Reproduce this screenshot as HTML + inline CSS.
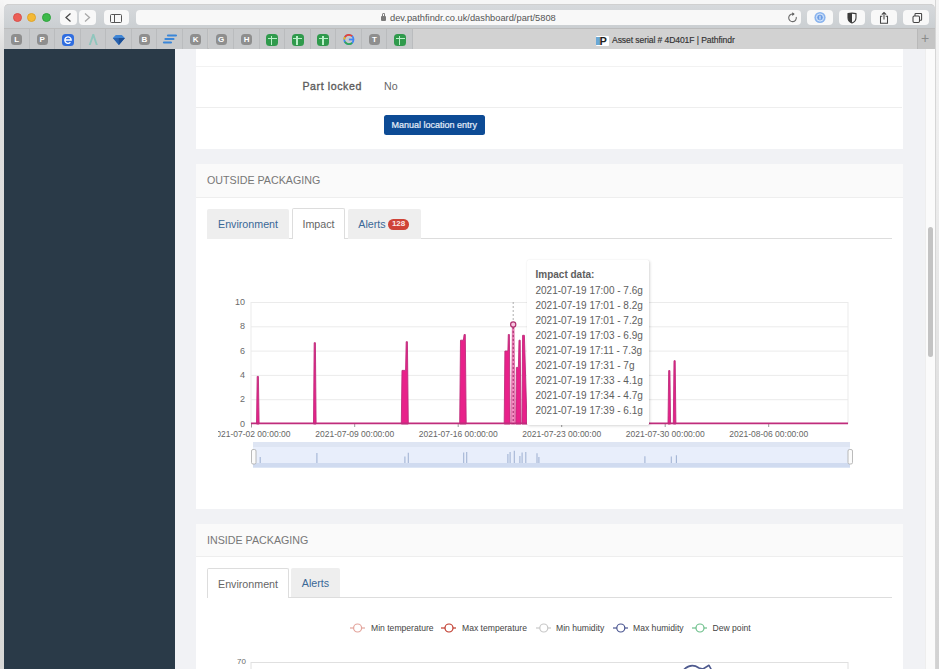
<!DOCTYPE html>
<html><head><meta charset="utf-8">
<style>
*{box-sizing:border-box;margin:0;padding:0}
html,body{width:939px;height:669px;overflow:hidden;background:#f6f6f6;font-family:"Liberation Sans",sans-serif}
.a{position:absolute}
#leftstrip{left:0;top:0;width:4px;height:669px;background:linear-gradient(#f6f6f6 0,#dedede 50px,#d8d8d6 100%)}
#rightstrip{left:934.5px;top:0;width:4.5px;height:669px;background:linear-gradient(#f4f4f4 0,#eeeeee 150px,#d2d2d2 100%);border-left:1px solid #d6d6d6}
#win{left:4px;top:4px;width:931px;height:665px;background:#f1f2f5;overflow:hidden;border-top:1px solid #c8c8c8;border-radius:5px 5px 0 0}
#toolbar{left:4px;top:4px;width:931px;height:24px;background:linear-gradient(#d6d9dc,#cbcfd2);border-top:1px solid #d0d0d0;border-radius:5px 5px 0 0}
#tabbar{left:4px;top:28px;width:931px;height:21px;background:#cbcbcb;border-top:1px solid #bcbcbc;border-bottom:1px solid #bdbdbd}
.tl{width:9.4px;height:9.4px;border-radius:50%;top:12.7px}
.btn{background:#f8f8f8;border-radius:4px;top:10px;height:15px}
.ptab{top:29px;height:20px;width:25.56px;border-right:1px solid #babcbe;background:#c7c9cb}
.pic{width:11px;height:11px;border-radius:3.5px;background:#a3a3a3;color:#fff;font-size:8px;font-weight:bold;text-align:center;line-height:11px;top:34px}
#sidebar{left:4px;top:49px;width:171px;height:620px;background:#2a3a48}
.card{background:#fff;left:196px;width:707px}
.hdr{background:#fafafa;border-bottom:1px solid #eeeeee}
.hl{font-size:10.7px;color:#777}
.tab{height:30px;top:0;font-size:10.7px;line-height:30px;text-align:center;color:#3a6897;background:#eeeeee;border-radius:2px 2px 0 0}
.tab.act{background:#fff;color:#666;border:1px solid #dddddd;border-bottom:none}
.yl{font-size:9px;color:#6a6a6a;text-align:right;width:20px}
.xl{font-size:8.5px;color:#666;white-space:nowrap;transform:translateX(-50%)}
.tt{font-size:10px;color:#5e5e5e;white-space:nowrap;left:535.5px}
.lg{font-size:8.6px;color:#444;white-space:nowrap;top:623px}
</style></head><body>
<div id="leftstrip" class="a"></div>
<div id="rightstrip" class="a"></div>
<div id="win" class="a"></div>
<div id="toolbar" class="a"></div>
<div class="a tl" style="left:12.9px;background:#ec5f57;border:1px solid #d9504a"></div>
<div class="a tl" style="left:27px;background:#f4b935;border:1px solid #dea42c"></div>
<div class="a tl" style="left:41.5px;background:#3cb94a;border:1px solid #2fa33d"></div>
<div class="a btn" style="left:60px;width:16.5px"></div>
<div class="a btn" style="left:79px;width:16.5px"></div>
<svg class="a" style="left:0;top:0" width="939" height="48">
  <polyline points="70.5,13.5 66,17.5 70.5,21.5" fill="none" stroke="#4a4a4a" stroke-width="1.3"/>
  <polyline points="85,13.5 89.5,17.5 85,21.5" fill="none" stroke="#a8a8a8" stroke-width="1.3"/>
</svg>
<div class="a btn" style="left:103.5px;width:25.5px"></div>
<div class="a" style="left:110px;top:13.5px;width:12px;height:9px;border:1.2px solid #555;border-radius:1.5px"></div>
<div class="a" style="left:114px;top:14px;width:1.2px;height:8px;background:#555"></div>
<div class="a btn" style="left:135.5px;width:665.5px"></div>
<div class="a" style="left:381px;top:16px;width:5px;height:5px;background:#7a7a7a;border-radius:1px"></div>
<div class="a" style="left:381.8px;top:13px;width:3.4px;height:4px;border:1px solid #7a7a7a;border-bottom:none;border-radius:2px 2px 0 0"></div>
<div class="a" style="left:390px;top:12.5px;font-size:9.3px;color:#555;white-space:nowrap">dev.pathfindr.co.uk/dashboard/part/5808</div>
<svg class="a" style="left:786px;top:11px" width="14" height="14">
  <path d="M10.2 6 A3.8 3.8 0 1 1 7 3.1" fill="none" stroke="#6a6a6a" stroke-width="1.1"/>
  <path d="M6.3 1.3 L8.7 3.1 L6.3 4.9 Z" fill="#555"/>
</svg>
<div class="a btn" style="left:807px;width:26px"></div>
<div class="a btn" style="left:839px;width:26px"></div>
<div class="a btn" style="left:871px;width:26px"></div>
<div class="a btn" style="left:903px;width:26px"></div>
<svg class="a" style="left:800px;top:4px" width="135" height="24">
  <circle cx="20" cy="13.5" r="5.6" fill="#8ab4ee"/>
  <circle cx="20" cy="13.5" r="3.6" fill="none" stroke="#dce9fb" stroke-width="1"/>
  <circle cx="20" cy="13.5" r="2.4" fill="#6d9de3"/>
  <rect x="19.5" y="11.8" width="1" height="3.6" fill="#eaf2fd"/>
  <path d="M48 9.6 Q52 8.6 56 9.6 V13.8 Q56 17.6 52 19 Q48 17.6 48 13.8 Z" fill="none" stroke="#3a3a3a" stroke-width="1.1"/>
  <path d="M48 9.6 Q50 9.1 52 9.1 V19 Q48 17.6 48 13.8 Z" fill="#3a3a3a"/>
  <path d="M81.8 10.6 L84 8.4 L86.2 10.6 M84 8.4 V15.5" fill="none" stroke="#444" stroke-width="1.05"/>
  <path d="M82.3 12.2 H80.5 V19.2 H87.5 V12.2 H85.7" fill="none" stroke="#444" stroke-width="1.05"/>
  <rect x="113" y="12" width="6.5" height="6.5" rx="1.2" fill="none" stroke="#444" stroke-width="1.05"/>
  <path d="M115 12 V10.2 Q115 9.5 115.8 9.5 H121 Q121.6 9.5 121.6 10.2 V15.6 Q121.6 16.3 121 16.3 H119.5" fill="none" stroke="#444" stroke-width="1.05"/>
</svg>
<!-- tab bar -->
<div id="tabbar" class="a"></div>

<div class="a" style="left:413px;top:29px;width:504px;height:20px;background:#d2d2d2"></div>
<div class="a" style="left:917px;top:29px;width:18px;height:20px;background:#c5c5c5;border-left:1px solid #b9b9b9"></div>
<div class="a" style="left:921px;top:30px;font-size:14px;color:#8a8a8a;line-height:16px">+</div>
<div class="a" style="left:596px;top:35.5px;width:13px;height:10px;background:#fff;border-radius:1px"></div>
<div class="a" style="left:596px;top:37px;width:4px;height:8px;background:#6aa8d6"></div>
<div class="a" style="left:599.5px;top:33.5px;font-size:11px;font-weight:bold;color:#222;line-height:14px">P</div>
<div class="a" style="left:612px;top:35px;font-size:8.6px;letter-spacing:-0.1px;color:#333;-webkit-text-stroke:0.15px #333;white-space:nowrap">Asset serial # 4D401F | Pathfindr</div>

<!-- content -->
<div id="sidebar" class="a"></div>
<div class="a" style="left:924.5px;top:49px;width:10px;height:620px;background:#fbfbfb;border-left:1px solid #eeeeee"></div>
<div class="a" style="left:927.5px;top:227px;width:5.5px;height:130px;background:#c3c3c3;border-radius:3px"></div>

<!-- card 1 -->
<div class="a card" style="top:49px;height:100px"></div>
<div class="a" style="left:196px;top:65.6px;width:706px;height:1px;background:#f2f2f2"></div>
<div class="a" style="left:196px;top:107px;width:706px;height:1px;background:#eeeeee"></div>
<div class="a" style="left:262px;top:80.3px;width:100px;text-align:right;font-size:10.6px;color:#5c5c5c;letter-spacing:0.6px;-webkit-text-stroke:0.35px #5c5c5c">Part locked</div>
<div class="a" style="left:384px;top:80.3px;font-size:10.6px;color:#666">No</div>
<div class="a" style="left:384px;top:115.3px;width:100.5px;height:19.3px;background:#0d4b95;border-radius:2.5px;color:#e6effa;-webkit-text-stroke:0.2px #e6effa;font-size:9px;line-height:21px;text-align:center;white-space:nowrap">Manual location entry</div>

<!-- card 2 -->
<div class="a card" style="top:164px;height:345px"></div>
<div class="a hdr" style="left:196px;top:164px;width:707px;height:34px"></div>
<div class="a hl" style="left:207px;top:174px">OUTSIDE PACKAGING</div>
<div class="a" style="left:207px;top:237.5px;width:685px;height:1px;background:#dddddd"></div>
<div class="a tab" style="left:207px;top:208.5px;width:82px">Environment</div>
<div class="a tab act" style="left:292px;top:208px;width:53px;height:30.5px">Impact</div>
<div class="a tab" style="left:348px;top:208.5px;width:73px;text-indent:-25px">Alerts</div>
<div class="a" style="left:387.8px;top:219.2px;width:21.6px;height:10.4px;background:#cf4337;border-radius:5.2px;color:#fbe9e7;font-size:8px;line-height:10.4px;text-align:center;font-weight:bold">128</div>

<svg class="a" style="left:0;top:0" width="939" height="669" id="chart1">
  <g stroke="#ebebeb" stroke-width="1">
    <line x1="251" y1="302.5" x2="848" y2="302.5"/>
    <line x1="251" y1="326.8" x2="848" y2="326.8"/>
    <line x1="251" y1="351.1" x2="848" y2="351.1"/>
    <line x1="251" y1="375.4" x2="848" y2="375.4"/>
    <line x1="251" y1="399.7" x2="848" y2="399.7"/>
    <line x1="251" y1="302" x2="251" y2="424"/>
    <line x1="848" y1="302" x2="848" y2="424"/>
  </g>
  <g stroke="#999" stroke-width="1">
    <line x1="251.5" y1="424" x2="251.5" y2="427.5"/>
    <line x1="354.7" y1="424" x2="354.7" y2="427"/>
    <line x1="458.2" y1="424" x2="458.2" y2="427"/>
    <line x1="561.7" y1="424" x2="561.7" y2="427"/>
    <line x1="665.2" y1="424" x2="665.2" y2="427"/>
    <line x1="768.7" y1="424" x2="768.7" y2="427"/>
  </g>
  <g fill="#e8218a" stroke="#bd2b7a" stroke-width="0.9" stroke-linejoin="round"><polygon points="256.5,424 257.2,376.4 258.4,376.4 259.1,424"/><polygon points="313.5,424 314.2,342.7 315.4,342.7 316.1,424"/><polygon points="401.3,424 402.0,370.4 405.6,370.4 406.2,341.7 407.4,341.7 408.3,424"/><polygon points="459.7,424 460.5,340.2 463.4,340.2 464.1,334.5 465.3,334.5 466.2,424"/><polygon points="504.2,424 504.9,351 507.9,351 508.3,334.5 509.4,334.5 510.1,424"/><polygon points="515.8,424 516.4,367.4 518.4,367.4 519,340.2 520.2,340.2 521,424"/><polygon points="522,424 522.6,335.3 524.4,335.3 527,424"/><polygon points="668,424 668.7,370.6 669.9,370.6 670.6,424"/><polygon points="673.3,424 674,360.7 675.2,360.7 675.9,424"/></g><polygon points="511.2,424 512.4,324.6 514,324.6 515.2,424" fill="#f48cc2" stroke="#d0408a" stroke-width="0.6"/>
  <line x1="251" y1="423.4" x2="848" y2="423.4" stroke="#c02c7c" stroke-width="1.9"/>
  <line x1="513.2" y1="302" x2="513.2" y2="324" stroke="#999" stroke-width="0.8" stroke-dasharray="2,2"/><line x1="513.2" y1="327" x2="513.2" y2="424" stroke="#9c2a66" stroke-width="1" stroke-dasharray="2,2"/>
  <circle cx="513.2" cy="324.5" r="2.6" fill="#f7c6e0" stroke="#b0306f" stroke-width="1.2"/>
  <!-- slider -->
  <rect x="253" y="442" width="597" height="25.5" fill="#e8eefb"/>
  <rect x="253" y="442" width="597" height="5" fill="#dee5f3"/>
  <rect x="253" y="463" width="597" height="4.6" fill="#d0dbf0"/>
  <g stroke="#a3b4d4" stroke-width="1.1"><line x1="260.2" y1="463" x2="260.2" y2="457.1"/><line x1="316.9" y1="463" x2="316.9" y2="452.9"/><line x1="404.9" y1="463" x2="404.9" y2="456.4"/><line x1="408.3" y1="463" x2="408.3" y2="452.8"/><line x1="463.7" y1="463" x2="463.7" y2="452.6"/><line x1="466.7" y1="463" x2="466.7" y2="451.9"/><line x1="507.9" y1="463" x2="507.9" y2="454.0"/><line x1="510.1" y1="463" x2="510.1" y2="451.9"/><line x1="514.3" y1="463" x2="514.3" y2="450.7"/><line x1="519.9" y1="463" x2="519.9" y2="455.9"/><line x1="522.1" y1="463" x2="522.1" y2="452.6"/><line x1="525.8" y1="463" x2="525.8" y2="452.1"/><line x1="537.0" y1="463" x2="537.0" y2="453.2"/><line x1="538.9" y1="463" x2="538.9" y2="457.0"/><line x1="644.9" y1="463" x2="644.9" y2="456.2"/><line x1="671.3" y1="463" x2="671.3" y2="456.4"/><line x1="676.4" y1="463" x2="676.4" y2="455.2"/></g>
  <rect x="251.5" y="449.5" width="4.5" height="14.5" rx="1.5" fill="#fbfbfb" stroke="#aaa" stroke-width="0.8"/>
  <rect x="848" y="449.5" width="4.5" height="14.5" rx="1.5" fill="#fbfbfb" stroke="#aaa" stroke-width="0.8"/>
</svg>
<div class="a yl" style="left:225px;top:297px">10</div>
<div class="a yl" style="left:225px;top:321.3px">8</div>
<div class="a yl" style="left:225px;top:345.6px">6</div>
<div class="a yl" style="left:225px;top:369.9px">4</div>
<div class="a yl" style="left:225px;top:394.2px">2</div>
<div class="a yl" style="left:225px;top:418.5px">0</div>
<div class="a xl" style="left:251px;top:428.5px">2021-07-02 00:00:00</div>
<div class="a xl" style="left:354.7px;top:428.5px">2021-07-09 00:00:00</div>
<div class="a xl" style="left:458.2px;top:428.5px">2021-07-16 00:00:00</div>
<div class="a xl" style="left:561.7px;top:428.5px">2021-07-23 00:00:00</div>
<div class="a xl" style="left:665.2px;top:428.5px">2021-07-30 00:00:00</div>
<div class="a xl" style="left:768.7px;top:428.5px">2021-08-06 00:00:00</div>
<div class="a" style="left:196px;top:428px;width:21.8px;height:13px;background:#fff"></div>

<!-- tooltip -->
<div class="a" style="left:527px;top:259.6px;width:122.4px;height:165px;background:#fff;border-radius:1.5px;box-shadow:1px 1px 3px rgba(0,0,0,0.16),0 0 1px rgba(0,0,0,0.1)"></div>
<div class="a tt" style="top:269px;font-weight:bold">Impact data:</div>
<div class="a tt" style="top:284.5px">2021-07-19 17:00 - 7.6g</div>
<div class="a tt" style="top:299.5px">2021-07-19 17:01 - 8.2g</div>
<div class="a tt" style="top:314.5px">2021-07-19 17:01 - 7.2g</div>
<div class="a tt" style="top:329.5px">2021-07-19 17:03 - 6.9g</div>
<div class="a tt" style="top:344.5px">2021-07-19 17:11 - 7.3g</div>
<div class="a tt" style="top:359.5px">2021-07-19 17:31 - 7g</div>
<div class="a tt" style="top:374.5px">2021-07-19 17:33 - 4.1g</div>
<div class="a tt" style="top:389.5px">2021-07-19 17:34 - 4.7g</div>
<div class="a tt" style="top:404.5px">2021-07-19 17:39 - 6.1g</div>

<!-- card 3 -->
<div class="a card" style="top:524px;height:145px"></div>
<div class="a hdr" style="left:196px;top:524px;width:707px;height:33px"></div>
<div class="a hl" style="left:207px;top:534px">INSIDE PACKAGING</div>
<div class="a" style="left:207px;top:597px;width:685px;height:1px;background:#dddddd"></div>
<div class="a tab act" style="left:207px;top:567.5px;width:82px;height:30px">Environment</div>
<div class="a tab" style="left:291px;top:568px;width:49px;height:29px">Alerts</div>

<svg class="a" style="left:0;top:0" width="939" height="669">
  <g fill="#fff" stroke-width="1.2">
    <line x1="350" y1="628" x2="365" y2="628" stroke="#e3a49c"/><circle cx="357.6" cy="628" r="4" stroke="#e3a49c"/>
    <line x1="441" y1="628" x2="456" y2="628" stroke="#c0392b"/><circle cx="449" cy="628" r="4" stroke="#c0392b"/>
    <line x1="536" y1="628" x2="551" y2="628" stroke="#c8c8c8"/><circle cx="543.8" cy="628" r="4" stroke="#c8c8c8"/>
    <line x1="613" y1="628" x2="628" y2="628" stroke="#4a5590"/><circle cx="620.8" cy="628" r="4" stroke="#4a5590"/>
    <line x1="692" y1="628" x2="707" y2="628" stroke="#6cbf8a"/><circle cx="700" cy="628" r="4" stroke="#6cbf8a"/>
  </g>
  <line x1="251" y1="662.5" x2="848" y2="662.5" stroke="#e0e0e0"/>
  <line x1="251" y1="662" x2="251" y2="669" stroke="#e0e0e0"/>
  <line x1="848" y1="662" x2="848" y2="669" stroke="#e0e0e0"/>
  <path d="M683.5 670 Q691 662.5 699 668 L703 669 L709 665.3 L711.5 670" fill="none" stroke="#4e5a8e" stroke-width="1.6" stroke-linejoin="round"/>
</svg>
<div class="a lg" style="left:371px">Min temperature</div>
<div class="a lg" style="left:462px">Max temperature</div>
<div class="a lg" style="left:556px">Min humidity</div>
<div class="a lg" style="left:633px">Max humidity</div>
<div class="a lg" style="left:712.5px">Dew point</div>
<div class="a yl" style="left:226px;top:657px;font-size:8px">70</div>

<div class="a ptab" style="left:4.00px"></div>
<div class="a ptab" style="left:29.56px"></div>
<div class="a ptab" style="left:55.12px"></div>
<div class="a ptab" style="left:80.69px"></div>
<div class="a ptab" style="left:106.25px"></div>
<div class="a ptab" style="left:131.81px"></div>
<div class="a ptab" style="left:157.38px"></div>
<div class="a ptab" style="left:182.94px"></div>
<div class="a ptab" style="left:208.50px"></div>
<div class="a ptab" style="left:234.06px"></div>
<div class="a ptab" style="left:259.62px"></div>
<div class="a ptab" style="left:285.19px"></div>
<div class="a ptab" style="left:310.75px"></div>
<div class="a ptab" style="left:336.31px"></div>
<div class="a ptab" style="left:361.88px"></div>
<div class="a ptab" style="left:387.44px"></div>
<div class="a pic" style="left:11.10px;background:#8e8e8e">L</div>
<div class="a pic" style="left:36.66px;background:#8e8e8e">P</div>
<div class="a pic" style="left:62.22px;background:#2f6de0;width:12px;height:12px;left:61.72px;top:33.8px"></div><svg class="a" style="left:61.72px;top:33.8px" width="12" height="12"><path d="M2.8 6 H9.2 A3.2 3.2 0 1 0 8.4 8.2" fill="none" stroke="#fff" stroke-width="1.3"/></svg>
<div class="a pic" style="left:138.90px;background:#8e8e8e">B</div>
<div class="a pic" style="left:190.02px;background:#8e8e8e">K</div>
<div class="a pic" style="left:215.58px;background:#8e8e8e">G</div>
<div class="a pic" style="left:241.14px;background:#8e8e8e">H</div>
<div class="a pic" style="left:266.70px;background:#2f9a4c;width:12px;height:12px;top:34px;left:266.20px"></div><div class="a" style="left:267.70px;top:37.6px;width:9px;height:1.6px;background:#b9f0c8"></div><div class="a" style="left:270.80px;top:35.5px;width:1.6px;height:9.5px;background:#b9f0c8"></div>
<div class="a pic" style="left:292.26px;background:#2f9a4c;width:12px;height:12px;top:34px;left:291.76px"></div><div class="a" style="left:293.26px;top:37.6px;width:9px;height:1.6px;background:#b9f0c8"></div><div class="a" style="left:296.36px;top:35.5px;width:1.6px;height:9.5px;background:#b9f0c8"></div>
<div class="a pic" style="left:317.82px;background:#2f9a4c;width:12px;height:12px;top:34px;left:317.32px"></div><div class="a" style="left:318.82px;top:37.6px;width:9px;height:1.6px;background:#b9f0c8"></div><div class="a" style="left:321.92px;top:35.5px;width:1.6px;height:9.5px;background:#b9f0c8"></div>
<div class="a pic" style="left:368.94px;background:#8e8e8e">T</div>
<div class="a pic" style="left:394.50px;background:#2f9a4c;width:12px;height:12px;top:34px;left:394.00px"></div><div class="a" style="left:395.50px;top:37.6px;width:9px;height:1.6px;background:#b9f0c8"></div><div class="a" style="left:398.60px;top:35.5px;width:1.6px;height:9.5px;background:#b9f0c8"></div>
<svg class="a" style="left:0;top:28px" width="420" height="20"><path d="M88.78 17 L92.48 6 H94.08 L97.78 17 H95.88 L93.28 9.5 L90.68 17 Z" fill="#7cc4b8" opacity="0.75"/><path d="M112.84 10 L115.84 7 L121.84 7 L124.84 10 L118.84 17 Z" fill="#3f86d6"/><path d="M112.84 10 H124.84 L118.84 17 Z" fill="#2a63b0"/><path d="M118.84 10 L124.84 10 L118.84 17 Z" fill="#1d4f94"/><path d="M167.95999999999998 7.5 H175.95999999999998 M165.45999999999998 11 H173.45999999999998 M163.95999999999998 14.5 H170.95999999999998" stroke="#3a86d8" stroke-width="2.2" stroke-linecap="round"/><g transform="translate(0,1.5)"><circle cx="348.88" cy="10" r="4.6" fill="none" stroke="#4285f4" stroke-width="1.8"/><path d="M353.48 10 H348.88" stroke="#4285f4" stroke-width="1.8"/><path d="M344.88 7.7 A4.6 4.6 0 0 1 352.08 6.7" fill="none" stroke="#ea4335" stroke-width="1.8"/><path d="M344.88 12.3 A4.6 4.6 0 0 0 352.08 13.3" fill="none" stroke="#34a853" stroke-width="1.8"/><path d="M344.28 10 A4.6 4.6 0 0 1 344.88 7.7" fill="none" stroke="#fbbc05" stroke-width="1.8"/></g></svg>

</body></html>
